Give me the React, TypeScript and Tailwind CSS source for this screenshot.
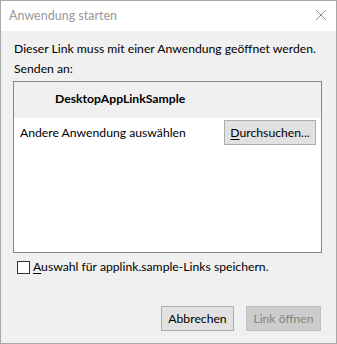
import React from "react";

export default function App() {
  const font = { fontFamily: 'Lato, "Segoe UI", sans-serif' };
  return (
    <div
      className="w-[337px] h-[344px] border border-[#a9a9a9] bg-[#f0f0f0] flex flex-col text-[12.2px] text-black"
      style={font}
    >
      <div className="h-[30px] bg-white flex items-center justify-between pl-[8px] pr-[9px]">
        <span className="text-[#999999] text-[12.5px] leading-[16px] mt-[-1px]">Anwendung starten</span>
        <svg width="12" height="12" viewBox="0 0 12 12" className="mt-[-2px]">
          <path d="M1 1 L11 11 M11 1 L1 11" stroke="#8c8c8c" strokeWidth="1" fill="none" />
        </svg>
      </div>
      <div className="flex-1 flex flex-col pl-[12px] pr-[14px] pt-[8px] pb-[12px]">
        <div className="leading-[20px] pl-[1px] whitespace-nowrap">Dieser Link muss mit einer Anwendung geöffnet werden.</div>
        <div className="leading-[20px] pl-[1px]">Senden an:</div>
        <div className="mt-[2px] h-[172px] border border-[#828790] bg-white flex flex-col">
          <div className="h-[36px] bg-[#f0f0f0] flex items-center pl-[41px]">
            <span className="font-bold leading-[16px] mt-[-2px]">DesktopAppLinkSample</span>
          </div>
          <div className="flex items-start justify-between pl-[6px] pr-[5px] pt-[2px]">
            <span className="leading-[16px] mt-[5px]">Andere Anwendung auswählen</span>
            <button className="w-[92px] h-[25px] border border-[#adadad] bg-[#e1e1e1] flex items-center justify-center leading-[16px]">
              <span>
                <span className="underline underline-offset-2">D</span>urchsuchen...
              </span>
            </button>
          </div>
        </div>
        <div className="flex items-center mt-[7px] pl-[4px]">
          <div className="w-[13px] h-[13px] border border-[#333333] bg-white"></div>
          <span className="ml-[3px] leading-[16px] mt-[-1px]">
            <span className="underline underline-offset-2">A</span>uswahl für applink.sample-Links speichern.
          </span>
        </div>
        <div className="flex-1"></div>
        <div className="flex justify-end gap-[12px] pr-[1px]">
          <button className="w-[73px] h-[25px] border border-[#adadad] bg-[#e1e1e1] flex items-center justify-center leading-[16px]">
            Abbrechen
          </button>
          <button className="w-[75px] h-[25px] border border-[#bfbfbf] bg-[#cccccc] text-[#838383] flex items-center justify-center leading-[16px]">
            Link öffnen
          </button>
        </div>
      </div>
    </div>
  );
}
